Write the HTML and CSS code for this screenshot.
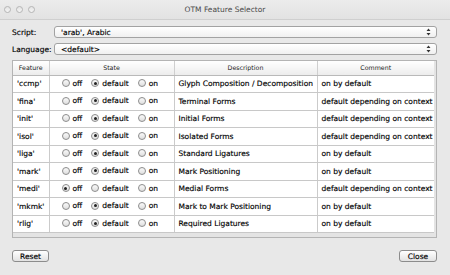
FILE: index.html
```
<!DOCTYPE html>
<html lang="en">

<head>
    <meta charset="UTF-8" />
    <title>OTM Feature Selector</title>
    <link rel="stylesheet" href="styles.css">
</head>

<body>
    <div class="window">
        <div class="titlebar">
            <div class="lights">
                <span></span><span></span><span></span>
            </div>
            <div class="title">OTM Feature Selector</div>
        </div>

        <div class="content">
            <div class="field">
                <label>Script:</label>
                <div class="select">
                    <span>'arab', Arabic</span>
                    <svg class="arrows" width="5" height="8" viewBox="0 0 5 8">
                        <path d="M0.5 3 L2.5 0.5 L4.5 3 Z M0.5 5 L2.5 7.5 L4.5 5 Z" fill="#333" />
                    </svg>
                </div>
            </div>
            <div class="field">
                <label>Language:</label>
                <div class="select">
                    <span>&lt;default&gt;</span>
                    <svg class="arrows" width="5" height="8" viewBox="0 0 5 8">
                        <path d="M0.5 3 L2.5 0.5 L4.5 3 Z M0.5 5 L2.5 7.5 L4.5 5 Z" fill="#333" />
                    </svg>
                </div>
            </div>

            <div class="table-frame">
                <table>
                    <colgroup>
                        <col class="c-feature">
                        <col class="c-state">
                        <col class="c-desc">
                        <col class="c-comment">
                    </colgroup>
                    <thead>
                        <tr>
                            <th>Feature</th>
                            <th>State</th>
                            <th>Description</th>
                            <th>Comment</th>
                        </tr>
                    </thead>
                    <tbody id="rows"></tbody>
                </table>
            </div>

            <div class="buttons">
                <button>Reset</button>
                <button>Close</button>
            </div>
        </div>
    </div>

    <script>
        const features = [
            ["'ccmp'", 1, "Glyph Composition / Decomposition", "on by default"],
            ["'fina'", 1, "Terminal Forms", "default depending on context"],
            ["'init'", 1, "Initial Forms", "default depending on context"],
            ["'isol'", 1, "Isolated Forms", "default depending on context"],
            ["'liga'", 1, "Standard Ligatures", "on by default"],
            ["'mark'", 1, "Mark Positioning", "on by default"],
            ["'medi'", 0, "Medial Forms", "default depending on context"],
            ["'mkmk'", 1, "Mark to Mark Positioning", "on by default"],
            ["'rlig'", 1, "Required Ligatures", "on by default"]
        ];
        const states = ["off", "default", "on"];
        const tbody = document.getElementById('rows');

        features.forEach(f => {
            const tr = document.createElement('tr');
            let radios = '';
            states.forEach((s, i) => {
                radios += '<span class="opt"><span class="radio' + (i === f[1] ? ' checked' : '') + '"></span>' + s + '</span>';
            });
            tr.innerHTML = '<td>' + f[0] + '</td><td class="state">' + radios + '</td><td>' + f[2] + '</td><td>' + f[3] + '</td>';
            tbody.appendChild(tr);
        });
    </script>
</body>

</html>
```

FILE: styles.css
```
* {
    box-sizing: border-box;
    font-family: 'DejaVu Sans', 'Liberation Sans', sans-serif;
}

body {
    margin: 0;
    background-color: #e8e8e8;
}

.window {
    width: 450px;
    height: 275px;
    background-color: #e8e8e8;
    color: #000;
    font-size: 7.5px;
    -webkit-text-stroke: 0.15px #000;
}

.titlebar {
    height: 20px;
    background: linear-gradient(#ececec, #e2e2e2);
    border-bottom: 1px solid #cfcfcf;
    display: flex;
    align-items: center;
    position: relative;
}

.lights {
    display: flex;
    gap: 5px;
    padding-left: 4px;
}

.lights span {
    width: 7px;
    height: 7px;
    border-radius: 50%;
    border: 1px solid #b5b5b5;
    background: linear-gradient(#e4e4e4, #f4f4f4);
}

.title {
    position: absolute;
    left: 0;
    right: 0;
    text-align: center;
    color: #4a4a4a;
    -webkit-text-stroke: 0;
    font-size: 7.5px;
}

.content {
    padding: 6px 13px 0 12px;
}

.field {
    display: flex;
    align-items: center;
    height: 12px;
    margin-bottom: 5px;
}

.field label {
    width: 42px;
    flex-shrink: 0;
}

.select {
    flex: 1;
    height: 12px;
    border: 1px solid #a2a2a2;
    border-radius: 3px;
    background: linear-gradient(#ffffff, #f0f0f0);
    display: flex;
    align-items: center;
    justify-content: space-between;
    padding: 0 5px 0 6px;
}

.table-frame {
    margin-top: 5px;
    height: 178px;
    border: 1px solid #b4b4b4;
    background-color: #e4e4e4;
    padding-right: 2px;
}

table {
    width: 421px;
    border-collapse: collapse;
    table-layout: fixed;
    background-color: white;
}

.c-feature { width: 36px; }
.c-state { width: 125px; }
.c-desc { width: 143px; }
.c-comment { width: 117px; }

th {
    height: 14px;
    font-weight: normal;
    font-size: 6.3px;
    color: #222;
    -webkit-text-stroke: 0;
    background: linear-gradient(#ffffff, #ececec);
    border-right: 1px solid #cfcfcf;
    border-bottom: 1px solid #b9b9b9;
    padding: 0;
}

td {
    height: 17.5px;
    padding: 0 0 0 4px;
    border-right: 1px solid #cbcbcb;
    border-bottom: 1px solid #c8c8c8;
    white-space: nowrap;
    overflow: hidden;
}

th:last-child,
td:last-child {
    border-right: none;
}

td.state {
    padding-left: 12px;
}

.opt {
    display: inline-flex;
    align-items: center;
    margin-right: 9px;
}

.radio {
    width: 8px;
    height: 8px;
    border-radius: 50%;
    border: 1px solid #8e8e8e;
    background: linear-gradient(#fafafa, #dedede);
    margin-right: 3px;
    position: relative;
}

.radio.checked::after {
    content: '';
    position: absolute;
    left: 1.5px;
    top: 1.5px;
    width: 3px;
    height: 3px;
    border-radius: 50%;
    background-color: #222;
}

.buttons {
    display: flex;
    justify-content: space-between;
    margin-top: 12px;
}

button {
    width: 37px;
    height: 12px;
    padding: 0;
    font-size: 7.5px;
    color: #000;
    -webkit-text-stroke: 0.15px #000;
    border: 1px solid #8c8c8c;
    border-radius: 3px;
    background: linear-gradient(#ffffff, #e2e2e2);
}

button:last-child {
    width: 38px;
}
```
